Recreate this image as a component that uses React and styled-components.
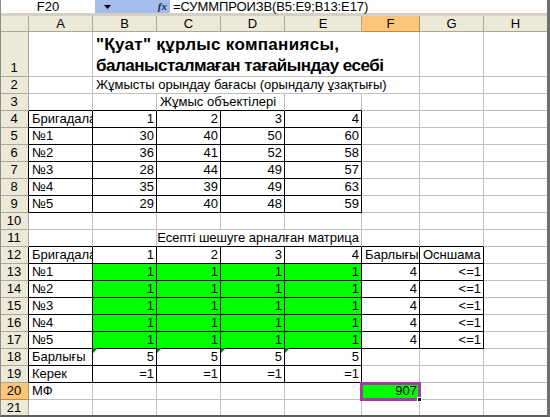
import React from "react";
import styled, { createGlobalStyle } from "styled-components";

const Global = createGlobalStyle`
  html, body { margin: 0; padding: 0; background: #ffffff; overflow: hidden; }
  * { box-sizing: border-box; }
`;

const COL_W = [28, 64, 64, 64, 64, 77, 58, 64, 64];
const LETTERS = ["A", "B", "C", "D", "E", "F", "G", "H"];
const GRID = "#c0c0c0";
const HEAD_BG = "#ece9d8";
const HEAD_LINE = "#aca899";
const SEL_HEAD = "#fbc57a";

const Window = styled.div`
  width: 550px;
  height: 417px;
  overflow: hidden;
  background: #d4d0c8;
  border-left: 1px solid #8c8c8c;
  border-right: 3px solid #6f6f6f;
  border-bottom: 2px solid #5e5e5e;
  font-family: "Liberation Sans", Arial, sans-serif;
  font-size: 13px;
  color: #000;
  display: flex;
  flex-direction: column;
`;

const FormulaBar = styled.div`
  height: 13px;
  display: flex;
  align-items: stretch;
  background: #ffffff;
  margin-bottom: 3px;
`;

const NameBox = styled.div`
  width: 94px;
  background: #ffffff;
  text-align: center;
  line-height: 13px;
  font-size: 13px;
`;

const DropArea = styled.div`
  width: 75px;
  background: #a4bdec;
  display: flex;
  align-items: center;
  justify-content: space-between;
  padding: 0 3px 0 9px;
`;

const FxLabel = styled.span`
  font-family: "Liberation Serif", "Times New Roman", serif;
  font-style: italic;
  font-weight: bold;
  font-size: 11px;
  color: #1c2a4a;
  line-height: 13px;
`;

const FormulaText = styled.div`
  flex: 1;
  padding-left: 3px;
  line-height: 13px;
  white-space: nowrap;
  letter-spacing: -0.1px;
`;

const Sheet = styled.div`
  display: grid;
  grid-template-columns: ${COL_W.map((w) => w + "px").join(" ")};
  grid-template-rows: 16px 45px repeat(20, 17px);
  background: #ffffff;
  width: 546px;
`;

const ColHead = styled.div`
  background: ${(p) => (p.$sel ? SEL_HEAD : HEAD_BG)};
  border-right: 1px solid ${(p) => (p.$sel ? "#c48a3a" : HEAD_LINE)};
  border-bottom: 1px solid ${(p) => (p.$sel ? "#c48a3a" : HEAD_LINE)};
  text-align: center;
  line-height: 15px;
  font-size: 13px;
`;

const RowHead = styled.div`
  background: ${(p) => (p.$sel ? SEL_HEAD : HEAD_BG)};
  border-right: 1px solid ${(p) => (p.$black ? "#000" : p.$sel ? "#c48a3a" : HEAD_LINE)};
  border-bottom: 1px solid ${(p) => (p.$sel ? "#c48a3a" : HEAD_LINE)};
  display: flex;
  align-items: flex-end;
  justify-content: center;
  line-height: 16px;
  font-size: 13px;
  padding-right: 1px;
`;

const Cell = styled.div`
  position: relative;
  grid-column: span ${(p) => p.$span || 1};
  background: ${(p) => p.$bg || "#ffffff"};
  border-right: 1px solid ${(p) => (p.$rb ? "#000" : GRID)};
  border-bottom: 1px solid ${(p) => (p.$bb ? "#000" : GRID)};
  display: flex;
  align-items: flex-end;
  justify-content: ${(p) => (p.$align === "right" ? "flex-end" : "flex-start")};
  padding: 0 2px 0 3px;
  line-height: 16px;
  white-space: nowrap;
  overflow: visible;
  z-index: ${(p) => (p.$top ? 2 : 1)};
`;

const Title = styled.div`
  font-weight: bold;
  font-size: 17px;
  line-height: 21px;
  white-space: nowrap;
  padding-bottom: 0;
`;

const TitleLine = styled.div`
  letter-spacing: ${(p) => p.$ls}px;
`;

const Clip = styled.span`
  display: block;
  overflow: hidden;
  white-space: nowrap;
  width: calc(100% + 2px);
  margin-right: -2px;
`;

const ErrMark = styled.span`
  position: absolute;
  left: 0;
  top: -1px;
  width: 0;
  height: 0;
  border-top: 5px solid #0b7f24;
  border-right: 5px solid transparent;
`;

const Selection = styled.span`
  position: absolute;
  left: -2px;
  top: -1px;
  right: -2px;
  bottom: -2px;
  border: 3px solid #a23aa8;
  pointer-events: none;
`;

const Handle = styled.span`
  position: absolute;
  right: -4px;
  bottom: -4px;
  width: 5px;
  height: 5px;
  background: #000;
  border: 1px solid #fff;
`;

const regions = [
  { r1: 4, r2: 9, c1: 0, c2: 4 },
  { r1: 12, r2: 19, c1: 0, c2: 4 },
  { r1: 12, r2: 17, c1: 5, c2: 6 },
];
const inRegion = (r, c) =>
  regions.some((g) => r >= g.r1 && r <= g.r2 && c >= g.c1 && c <= g.c2);

const GREEN = "#00ff00";
const num = (v, extra = {}) => ({ text: String(v), align: "right", ...extra });
const txt = (v, extra = {}) => ({ text: v, ...extra });

const dataRows = {
  1: { B: { span: 5, title: ['"Қуат" құрлыс компаниясы,', "баланысталмаған тағайындау есебі"] } },
  2: { B: { span: 5, text: "Жұмысты орындау бағасы (орындалу ұзақтығы)" } },
  3: { C: { span: 2, text: "Жұмыс объектілері" } },
  4: { A: txt("Бригадалар", { clip: true }), B: num(1), C: num(2), D: num(3), E: num(4) },
  5: { A: txt("№1"), B: num(30), C: num(40), D: num(50), E: num(60) },
  6: { A: txt("№2"), B: num(36), C: num(41), D: num(52), E: num(58) },
  7: { A: txt("№3"), B: num(28), C: num(44), D: num(49), E: num(57) },
  8: { A: txt("№4"), B: num(35), C: num(39), D: num(49), E: num(63) },
  9: { A: txt("№5"), B: num(29), C: num(40), D: num(48), E: num(59) },
  11: { C: { span: 3, text: "Есепті шешуге арналған матрица", align: "right" } },
  12: {
    A: txt("Бригадалар", { clip: true }),
    B: num(1), C: num(2), D: num(3), E: num(4),
    F: txt("Барлығы"), G: txt("Осншама"),
  },
  18: {
    A: txt("Барлығы"),
    B: num(5, { mark: true }), C: num(5, { mark: true }), D: num(5, { mark: true }), E: num(5, { mark: true }),
  },
  19: { A: txt("Керек"), B: num("=1"), C: num("=1"), D: num("=1"), E: num("=1") },
  20: { A: txt("МФ"), F: num(907, { bg: GREEN, selected: true }) },
};
for (let i = 0; i < 5; i++) {
  dataRows[13 + i] = {
    A: txt("№" + (i + 1)),
    B: num(1, { bg: GREEN }), C: num(1, { bg: GREEN }), D: num(1, { bg: GREEN }), E: num(1, { bg: GREEN }),
    F: num(4), G: num("<=1"),
  };
}

function buildRow(r) {
  const spec = dataRows[r] || {};
  const out = [];
  let c = 0;
  while (c < 8) {
    const s = spec[LETTERS[c]] || {};
    const span = s.span || 1;
    const last = c + span - 1;
    const rb = inRegion(r, last) || inRegion(r, last + 1);
    let bb = false;
    for (let k = c; k <= last; k++) if (inRegion(r, k) || inRegion(r + 1, k)) bb = true;
    out.push(
      <Cell
        key={r + "-" + c}
        $span={span}
        $align={s.align}
        $bg={s.bg}
        $rb={rb}
        $bb={bb}
        $top={s.selected}
      >
        {s.mark && <ErrMark />}
        {s.title ? (
          <Title>
            <TitleLine $ls={0.3}>{s.title[0]}</TitleLine>
            <TitleLine $ls={-0.5}>{s.title[1]}</TitleLine>
          </Title>
        ) : s.clip ? (
          <Clip>{s.text}</Clip>
        ) : (
          s.text
        )}
        {s.selected && (
          <Selection>
            <Handle />
          </Selection>
        )}
      </Cell>
    );
    c += span;
  }
  return out;
}

export default function App() {
  const rows = [];
  for (let r = 1; r <= 21; r++) {
    rows.push(
      <RowHead key={"h" + r} $sel={r === 20} $black={inRegion(r, 0)}>
        {r}
      </RowHead>
    );
    rows.push(...buildRow(r));
  }
  return (
    <>
      <Global />
      <Window>
        <FormulaBar>
          <NameBox>F20</NameBox>
          <DropArea>
            <svg width="7" height="4" viewBox="0 0 7 4">
              <path d="M0 0 H7 L3.5 4 Z" fill="#000" />
            </svg>
            <FxLabel>fx</FxLabel>
          </DropArea>
          <FormulaText>=СУММПРОИЗВ(B5:E9;B13:E17)</FormulaText>
        </FormulaBar>
        <Sheet>
          <ColHead />
          {LETTERS.map((l) => (
            <ColHead key={l} $sel={l === "F"}>
              {l}
            </ColHead>
          ))}
          {rows}
        </Sheet>
      </Window>
    </>
  );
}
